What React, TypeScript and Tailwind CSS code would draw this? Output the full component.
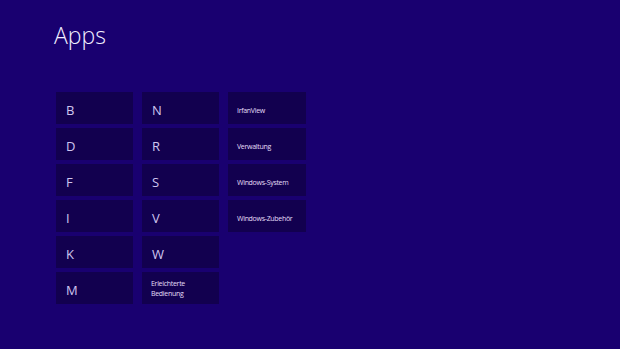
const col1 = ["B", "D", "F", "I", "K", "M"];
const col2 = ["N", "R", "S", "V", "W"];
const col3 = ["IrfanView", "Verwaltung", "Windows-System", "Windows-Zubehör"];

function LetterTile({ label }: { label: string }) {
  return (
    <div className="h-[32px] w-[77px] bg-[#12004f] flex items-center pl-[10px] pt-[5px]">
      <span className="text-[13px] leading-none text-[#cfc6ef]">{label}</span>
    </div>
  );
}

function NameTile({ label }: { label: string }) {
  return (
    <div className="h-[32px] w-[78px] bg-[#12004f] flex items-center pl-[9px] pt-[4px]">
      <span className="text-[7px] tracking-[-0.3px] leading-none text-[#e4def8]">{label}</span>
    </div>
  );
}

export default function App() {
  return (
    <div
      className="w-[620px] h-[349px] bg-[#190070] overflow-hidden"
      style={{ fontFamily: '"Open Sans", "Noto Sans", sans-serif' }}
    >
      <h1 className="pl-[54px] pt-[24px] text-[23px] font-light leading-none text-[#f2efff]">Apps</h1>

      <div className="flex gap-[9px] pl-[56px] pt-[45px]">
        <div className="flex flex-col gap-[4px]">
          {col1.map((l) => (
            <LetterTile key={l} label={l} />
          ))}
        </div>
        <div className="flex flex-col gap-[4px]">
          {col2.map((l) => (
            <LetterTile key={l} label={l} />
          ))}
          <div className="h-[32px] w-[77px] bg-[#12004f] flex flex-col justify-center pl-[9px] pt-[2px]">
            <span className="text-[7px] tracking-[-0.3px] leading-[10px] text-[#e4def8]">Erleichterte</span>
            <span className="text-[7px] tracking-[-0.3px] leading-[10px] text-[#e4def8]">Bedienung</span>
          </div>
        </div>
        <div className="flex flex-col gap-[4px]">
          {col3.map((l) => (
            <NameTile key={l} label={l} />
          ))}
        </div>
      </div>
    </div>
  );
}
